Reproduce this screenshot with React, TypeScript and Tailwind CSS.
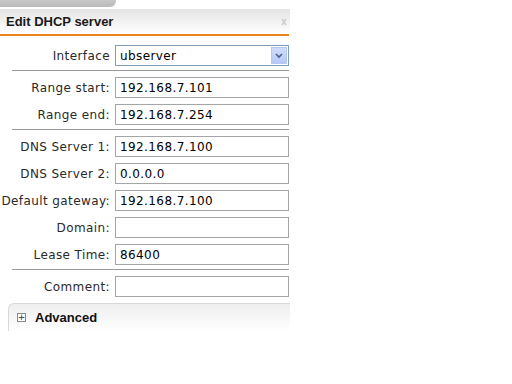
import React from "react";

const Sep = () => <div className="ml-[12px] mr-[1px] h-px bg-[#9a9a9a] mt-[1px] mb-[3px]" />;

function Row({ label, value, select }: { label: string; value: string; select?: boolean }) {
  return (
    <div className="flex items-center h-[27px]">
      <div className="w-[115px] text-right pr-[5px] text-[12px] tracking-[0.4px] text-[#2a2a2a]">{label}</div>
      {select ? (
        <div className="w-[174px] h-[21px] border border-[#7f9db9] bg-white flex items-center justify-between">
          <span className="pl-[4px] text-[12px] tracking-[0.4px] text-black">{value}</span>
          <div className="w-[16px] h-[17px] mr-[1px] bg-gradient-to-b from-[#d0dcfd] to-[#b7c8f7] border border-[#b5c8f5] flex items-center justify-center">
            <svg width="8" height="6" viewBox="0 0 8 6"><path d="M1 1 L4 4 L7 1" stroke="#4d6185" strokeWidth="1.6" fill="none" /></svg>
          </div>
        </div>
      ) : (
        <div className="w-[174px] h-[21px] border border-[#a5a5a5] bg-white flex items-center">
          <span className="pl-[4px] text-[12px] tracking-[0.4px] text-black">{value}</span>
        </div>
      )}
    </div>
  );
}

export default function App() {
  return (
    <div className="w-[512px] h-[384px] bg-white relative" style={{ fontFamily: "'DejaVu Sans', sans-serif" }}>
      <div className="h-[7px] w-[116px] bg-gradient-to-b from-[#c8c8c8] to-[#b9b9b9] rounded-br-[6px]" />
      <div className="w-[290px]">
        <div className="mt-[2px] h-[25px] bg-gradient-to-b from-[#e4e4e4] to-white flex items-center justify-between pl-[6px] pr-[3px]">
          <span className="text-[13px] font-bold text-[#1a1a1a]" style={{ fontFamily: "'Liberation Sans', Arial, sans-serif" }}>Edit DHCP server</span>
          <svg width="6" height="8" viewBox="0 0 6 8"><path d="M1 1 L5 7 M5 1 L1 7" stroke="#cfcfcf" strokeWidth="1.6" fill="none" /></svg>
        </div>
        <div className="h-[2px] bg-[#e8861a] mr-[1px]" />
        <div className="pt-[6px]">
          <Row label="Interface" value="ubserver" select />
          <Sep />
          <Row label="Range start:" value="192.168.7.101" />
          <Row label="Range end:" value="192.168.7.254" />
          <Sep />
          <Row label="DNS Server 1:" value="192.168.7.100" />
          <Row label="DNS Server 2:" value="0.0.0.0" />
          <Row label="Default gateway:" value="192.168.7.100" />
          <Row label="Domain:" value="" />
          <Row label="Lease Time:" value="86400" />
          <Sep />
          <Row label="Comment:" value="" />
        </div>
        <div className="ml-[8px] mt-[3px] h-[28px] rounded-tl-[6px] border-l border-t border-[#d8d8d8] bg-gradient-to-b from-[#eeeeee] to-white flex items-center">
          <div className="ml-[8px] w-[9px] h-[9px] border border-[#8a8a8a] bg-white flex items-center justify-center text-[9px] leading-none text-[#333]">+</div>
          <span className="ml-[9px] text-[13px] font-bold text-[#111]" style={{ fontFamily: "'Liberation Sans', Arial, sans-serif" }}>Advanced</span>
        </div>
      </div>
    </div>
  );
}
